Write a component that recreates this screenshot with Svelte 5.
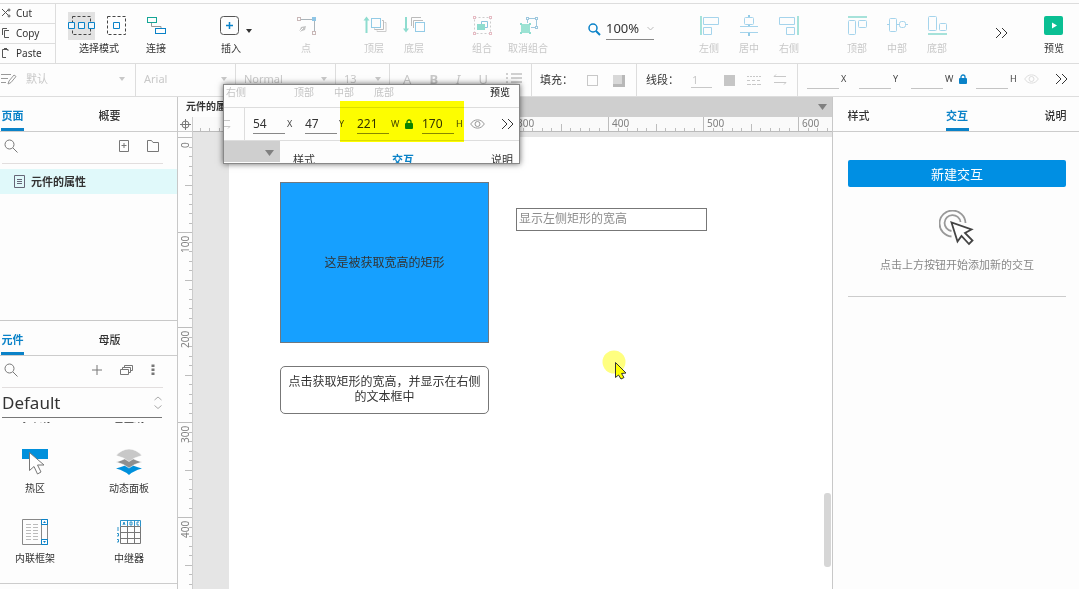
<script>
  const orderTools = [
    { kind: 'front', label: '顶层' },
    { kind: 'back', label: '底层' }
  ];
  const groupTools = [
    { kind: 'group', label: '组合' },
    { kind: 'ungroup', label: '取消组合' }
  ];
  const alignX = [
    { kind: 'left', label: '左侧' },
    { kind: 'center', label: '居中' },
    { kind: 'right', label: '右侧' }
  ];
  const alignY = [
    { kind: 'top', label: '顶部' },
    { kind: 'middle', label: '中部' },
    { kind: 'bottom', label: '底部' }
  ];
  const hundredPx = 95;
  let workWidth = $state(650);
  let workHeight = $state(490);
  const ticksUpTo = (length) =>
    Array.from({ length: 400 }, (_, i) => i - 3)
      .map((n) => ({
        at: Math.round((n * hundredPx) / 10),
        value: n * 10,
        size: n % 10 === 0 ? 15 : n % 5 === 0 ? 8 : 4
      }))
      .filter((t) => t.at < length);
  const majorsUpTo = (length) => ticksUpTo(length - 24).filter((t) => t.value >= 0 && t.value % 100 === 0);
  let across = $derived(workWidth - 50);
  let down = $derived(workHeight - 40);
  let zoom = $state('100%');
</script>

{#snippet icon(kind)}
  <svg class="ico" viewBox="0 0 40 28" width="40" height="28" fill="none" aria-hidden="true">
    {#if kind === 'connect'}
      <path d="M15.500 11v3.500h9.500v2" stroke="#999" />
      <rect x="11.500" y="5.500" width="9" height="5" stroke="#15a596" />
      <rect x="19.500" y="16.500" width="10" height="5" stroke="#0a82c8" />
    {:else if kind === 'insert'}
      <rect x="9.500" y="4.500" width="18" height="18" rx="3" stroke="#555" />
      <path d="M18.500 10v7M15 13.500h7" stroke="#0a82c8" stroke-width="1.500" />
    {:else if kind === 'point'}
      <path d="M14 7.500h12M28.500 9v10" stroke="#aab4ba" />
      <rect x="11.500" y="5.500" width="3" height="3" stroke="#c9b8b8" />
      <rect x="26" y="5" width="4" height="4" fill="#8fc6e6" />
      <rect x="26.500" y="19.500" width="3" height="3" stroke="#c9b8b8" />
      <path d="M13 20l2-5 5-1-1 4z" fill="#c4c4c4" /><path d="M13 20l4-4" stroke="#fff" />
    {:else if kind === 'front'}
      <path d="M12.500 21V7" stroke="#8edccf" stroke-width="2" />
      <path d="M9.500 8.500l3-4 3 4z" fill="#8edccf" />
      <path d="M28 8.500h1.500v9h-9v-1" stroke="#bbb" />
      <path d="M30.500 10.500h1.500v9h-9v-1" stroke="#ccc" />
      <rect x="17.500" y="6.500" width="9" height="9" stroke="#93cbe6" fill="#fdfdfd" />
    {:else if kind === 'back'}
      <path d="M12 5v14" stroke="#8edccf" stroke-width="2" />
      <path d="M9 16.500l3 4 3-4z" fill="#8edccf" />
      <path d="M17.500 14V5.500h9.500M19.500 16V8.500H29" stroke="#bbb" />
      <rect x="21.500" y="10.500" width="9" height="9" stroke="#93cbe6" fill="#fdfdfd" />
    {:else if kind === 'group'}
      <rect x="12.500" y="5.500" width="16" height="16" stroke="#ccc" stroke-dasharray="2 2" />
      {#each [[11, 4], [27, 4], [11, 20], [27, 20]] as [x, y]}
        <rect x={x + 0.5} y={y + 0.5} width="2" height="2" stroke="#e6bcc4" fill="#fff" />
      {/each}
      <rect x="15" y="12" width="8" height="6" fill="#8edccf" />
      <path d="M19.500 12V9.500h6v6H23" stroke="#8cc5df" />
    {:else if kind === 'ungroup'}
      <path d="M19.500 11V6.500h9v9H23" stroke="#9ec8de" />
      <rect x="18.500" y="5.500" width="2" height="2" stroke="#9ec8de" fill="#fff" />
      <rect x="27.500" y="5.500" width="2" height="2" stroke="#9ec8de" fill="#fff" />
      <rect x="27.500" y="14.500" width="2" height="2" stroke="#9ec8de" fill="#fff" />
      <rect x="13" y="12" width="9" height="9" fill="#9de3d4" />
      <path d="M12 11h2v2h-2zM21 11h2v2h-2zM12 20h2v2h-2zM21 20h2v2h-2z" fill="#8edccf" />
    {:else if kind === 'left'}
      <path d="M12 4v19" stroke="#a6e2da" stroke-width="2" />
      <path d="M14.500 5.500h15v7h-15zM14.500 15.500h8v7h-8z" stroke="#a5d4ec" stroke-linejoin="round" />
    {:else if kind === 'center'}
      <rect x="15.500" y="5.500" width="9" height="7" rx="1" stroke="#a5d4ec" />
      <path d="M20 3v2M20 13v2M20 20v4" stroke="#93cbe6" stroke-width="2" />
      <path d="M11 14.500h18M11 20.500h18" stroke="#a5d4ec" />
    {:else if kind === 'right'}
      <path d="M29 4v19" stroke="#a6e2da" stroke-width="2" />
      <path d="M10.500 5.500h15v7h-15zM17.500 15.500h8v7h-8z" stroke="#a5d4ec" stroke-linejoin="round" />
    {:else if kind === 'top'}
      <path d="M11 5h19" stroke="#a6e2da" stroke-width="2" />
      <rect x="11.500" y="8.500" width="7" height="14" rx="1" stroke="#a5d4ec" />
      <rect x="21.500" y="8.500" width="8" height="7" rx="1" stroke="#a5d4ec" />
    {:else if kind === 'middle'}
      <path d="M10 12.500h2M19 12.500h4M28 12.500h3" stroke="#a5d4ec" />
      <rect x="12.500" y="6.500" width="7" height="13" rx="1" stroke="#a5d4ec" />
      <rect x="22.500" y="9.500" width="6" height="6" rx="2" stroke="#a5d4ec" />
    {:else if kind === 'bottom'}
      <path d="M11 22h19" stroke="#a6e2da" stroke-width="2" />
      <rect x="11.500" y="4.500" width="8" height="14" rx="1" stroke="#a5d4ec" />
      <rect x="22.500" y="11.500" width="7" height="7" rx="1" stroke="#a5d4ec" />
    {:else if kind === 'preview'}
      <rect x="10" y="4" width="19" height="19" rx="2" fill="#0abf93" />
      <path d="M18 10.500v6l5-3z" fill="#fff" />
    {/if}
  </svg>
{/snippet}

{#snippet tool(t, on = false)}
  <button class="tool" class:on>{@render icon(t.kind)}<span>{t.label}</span></button>
{/snippet}

{#snippet chevrons()}
  <svg width="13" height="12" viewBox="0 0 13 12" fill="none" stroke="#333" aria-hidden="true"><path d="M1 1l5 5-5 5M7 1l5 5-5 5" /></svg>
{/snippet}

{#snippet caret(color = '#c8c8c8')}
  <svg class="caret" width="6" height="4" viewBox="0 0 6 4" aria-hidden="true"><path d="M0 0h6L3 4z" fill={color} /></svg>
{/snippet}

{#snippet lock(color)}
  <svg class="lock" width="8" height="10" viewBox="0 0 8 10" aria-hidden="true"><rect y="4" width="8" height="6" rx="1" fill={color} /><path d="M2 5V3a2 2 0 0 1 4 0v2" fill="none" stroke={color} stroke-width="1.300" /></svg>
{/snippet}

{#snippet eye(color)}
  <svg width="15" height="10" viewBox="0 0 15 10" fill="none" stroke={color} aria-hidden="true"><path d="M.7 5C4-.5 11-.5 14.300 5 11 10.500 4 10.500.7 5z" /><circle cx="7.500" cy="5" r="2.500" /></svg>
{/snippet}

{#snippet arrows()}
  <svg width="14" height="12" viewBox="0 0 14 12" fill="none" stroke="#c8c8c8" aria-hidden="true"><path d="M1 2.500h12M3 .5l-2 2M1 8.500h12M11 10.500l2-2" /></svg>
{/snippet}

{#snippet search()}
  <svg width="14" height="14" viewBox="0 0 14 14" fill="none" stroke="#777" aria-hidden="true"><circle cx="5.500" cy="5.500" r="4.500" /><path d="M9 9l4.500 4.500" /></svg>
{/snippet}

{#snippet field(label, value)}
  <label class="field"><input type="text" {value} /><span>{label}</span></label>
{/snippet}

<div class="app">
  <header class="bar">
    <div class="clip">
      <button><svg width="10" height="10" viewBox="0 0 10 10" fill="none" stroke="#555" aria-hidden="true"><path d="M1 1l6 6M1 8l6-6" /><circle cx="8" cy="2" r="1" /><circle cx="8" cy="8" r="1" /></svg>Cut</button>
      <button><svg width="10" height="10" viewBox="0 0 10 10" fill="none" stroke="#555" aria-hidden="true"><path d="M1.500 7V.5H6M3.500 2.500H8M3.500 2.500v7H8" /></svg>Copy</button>
      <button><svg width="10" height="10" viewBox="0 0 10 10" fill="none" stroke="#555" aria-hidden="true"><path d="M5 9.500H1.500v-8H7V3M3 .5h3" /></svg>Paste</button>
    </div>
    <div class="modes">
      <div class="pair">
        <button class="active" aria-label="相交选择">
          <svg width="27" height="28" viewBox="0 0 27 28" fill="none" aria-hidden="true">
            <rect x="4.500" y="4.500" width="18" height="18" stroke="#444" stroke-dasharray="3 2" />
            <path d="M.5 10.500h6v6h-6zM10.500 10.500h6v6h-6zM20.500 10.500h6v6h-6z" stroke="#0a82c8" fill="#eef6fb" />
          </svg>
        </button>
        <button aria-label="包含选择">
          <svg width="27" height="28" viewBox="0 0 27 28" fill="none" aria-hidden="true">
            <rect x="4.500" y="4.500" width="18" height="18" stroke="#444" stroke-dasharray="3 2" />
            <path d="M10.500 10.500h6v6h-6z" stroke="#0a82c8" />
          </svg>
        </button>
      </div>
      <span>选择模式</span>
    </div>
    <div class="set near">{@render tool({ kind: 'connect', label: '连接' }, true)}</div>
    <div class="set">{@render tool({ kind: 'insert', label: '插入' }, true)}{@render caret('#333')}</div>
    <div class="set">{@render tool({ kind: 'point', label: '点' })}</div>
    <div class="set mid">{#each orderTools as t}{@render tool(t)}{/each}</div>
    <div class="set mid wide">{#each groupTools as t}{@render tool(t)}{/each}</div>
    <div class="zoom">
      <svg width="13" height="13" viewBox="0 0 13 13" fill="none" stroke="#0a82c8" aria-hidden="true"><circle cx="5" cy="5" r="4" stroke-width="1.500" /><path d="M8 8l4 4" stroke-width="2" /></svg>
      <label class="drop"><select bind:value={zoom} aria-label="缩放"><option>100%</option></select>
        <svg width="7" height="4" viewBox="0 0 7 4" fill="none" stroke="#bbb" aria-hidden="true"><path d="M.5 0l3 3 3-3" /></svg></label>
    </div>
    <div class="set">{#each alignX as t}{@render tool(t)}{/each}</div>
    <div class="set mid">{#each alignY as t}{@render tool(t)}{/each}</div>
    <button class="more" aria-label="更多">{@render chevrons()}</button>
    <div class="set end">{@render tool({ kind: 'preview', label: '预览' }, true)}</div>
  </header>

  <div class="style">
    <div class="cell c1">
      <svg width="16" height="14" viewBox="0 0 16 14" fill="none" stroke="#999" aria-hidden="true"><path d="M0 2.500h10M0 6.500h7M0 10.500h5M7 12l1-3 5-6 2 1.500-5 6z" /></svg>
      <label class="drop"><select aria-label="样式"><option>默认</option></select>{@render caret()}</label>
    </div>
    <div class="cell c2"><label class="drop"><select aria-label="字体"><option>Arial</option></select>{@render caret()}</label></div>
    <div class="cell c2"><label class="drop"><select aria-label="字重"><option>Normal</option></select>{@render caret()}</label></div>
    <div class="cell c3"><label class="drop"><select aria-label="字号"><option>13</option></select>{@render caret()}</label></div>
    <div class="cell c4">
      <button>A</button><button><b>B</b></button><button><i>I</i></button><button><u>U</u></button>
      <button aria-label="列表"><svg width="16" height="12" viewBox="0 0 16 12" stroke="#d0d0d0" stroke-width="2" aria-hidden="true"><path d="M0 1h2M5 1h11M0 5h2M5 5h11M0 9h2M5 9h11" /></svg></button>
    </div>
    <div class="cell c5">
      <span>填充：</span>
      <button aria-label="填充颜色"><svg width="11" height="11" aria-hidden="true"><rect x=".5" y=".5" width="10" height="10" fill="none" stroke="#c8c8c8" /></svg></button>
      <button aria-label="阴影"><svg width="13" height="13" aria-hidden="true"><path d="M1 1h12v12H1z" fill="#b8b8b8" /><path d="M1 1h9v9H1z" fill="#d8d8d8" /></svg></button>
    </div>
    <div class="cell c6">
      <span>线段：</span>
      <input class="thin" type="text" value="1" aria-label="线宽" />
      <button aria-label="线颜色"><svg width="11" height="11" aria-hidden="true"><rect width="11" height="11" fill="#c6c6c6" /></svg></button>
      <button aria-label="线型"><svg width="14" height="11" viewBox="0 0 14 11" stroke="#c8c8c8" aria-hidden="true"><path d="M0 1.500h14" stroke-dasharray="2 1" /><path d="M0 5.500h14" stroke-dasharray="3 2" /><path d="M0 9.500h14" stroke-dasharray="4 1" /></svg></button>
      <button aria-label="箭头">{@render arrows()}</button>
    </div>
    <div class="cell c7">
      {@render field('X', '')}{@render field('Y', '')}{@render field('W', '')}
      <button class="lk" aria-label="锁定宽高比">{@render lock('#0a82c8')}</button>
      {@render field('H', '')}
      <button class="ey" aria-label="显示">{@render eye('#ddd')}</button>
      <button aria-label="更多属性">{@render chevrons()}</button>
    </div>
  </div>

  <main>
    <aside class="left">
      <section>
        <nav class="tabs"><button class="sel">页面</button><button>概要</button></nav>
        <div class="find">
          {@render search()}
          <button class="push" aria-label="新建页面"><svg width="10" height="12" viewBox="0 0 10 12" fill="none" stroke="#777" aria-hidden="true"><path d="M.5.5h9v11h-9zM5 3v5M2.500 5.500h5" /></svg></button>
          <button aria-label="新建文件夹"><svg width="12" height="12" viewBox="0 0 12 12" fill="none" stroke="#777" aria-hidden="true"><path d="M.5.5h4l1.500 2h5.500v9H.5z" /></svg></button>
        </div>
        <button class="page">
          <svg width="12" height="13" viewBox="0 0 12 13" fill="none" stroke="#667" aria-hidden="true"><path d="M.5.5h10v12H.5zM3 4.500h5M3 6.500h5M3 8.500h5" /></svg>
          元件的属性
        </button>
      </section>
      <section class="lib">
        <nav class="tabs"><button class="sel">元件</button><button>母版</button></nav>
        <div class="find">
          {@render search()}
          <button class="push" aria-label="添加"><svg width="10" height="10" viewBox="0 0 10 10" stroke="#777" aria-hidden="true"><path d="M5 0v10M0 5h10" /></svg></button>
          <button aria-label="元件库"><svg width="13" height="12" viewBox="0 0 13 12" fill="none" stroke="#777" aria-hidden="true"><path d="M.5 5.500h8v5h-8zM2.500 5V3.500h8v5H9M4.500 3V1.500h8v5H11" /></svg></button>
          <button class="dots" aria-label="选项"><svg width="4" height="12" viewBox="0 0 4 12" fill="#777" aria-hidden="true"><path d="M.5.5h3v2.500h-3zM.5 4.500h3V7h-3zM.5 8.500h3V11h-3z" /></svg></button>
        </div>
        <label class="drop library"><select aria-label="元件库"><option>Default</option></select>
          <svg width="8" height="14" viewBox="0 0 8 14" fill="none" stroke="#aaa" aria-hidden="true"><path d="M.5 4L4 1l3.500 3M.5 9.500l3.500 3 3.500-3" /></svg></label>
        <div class="shapes">
          <button><svg width="28" height="28" aria-hidden="true"><path d="M1 14h26" stroke="#888" /></svg>水平线</button>
          <button><svg width="28" height="28" aria-hidden="true"><path d="M14 1v26" stroke="#888" /></svg>垂直线</button>
          <button><svg width="28" height="28" viewBox="0 0 28 28" aria-hidden="true"><path d="M1 1h26v10H1z" fill="#0090dc" /><path d="M8.500 4.500v18l4.500-4 3.500 7.500 3.500-2-3.500-7h6.500z" fill="#fff" stroke="#777" /></svg>热区</button>
          <button><svg width="28" height="28" viewBox="0 0 28 28" aria-hidden="true"><path d="M1 20.500Q10 18 14 15q4 3 13 5.500Q18 23 14 27q-4-4-13-6.500z" fill="#0090dc" /><path d="M1 14Q9 12 14 8q5 4 13 6-8 2-13 6-5-4-13-6z" fill="#8f8f8f" stroke="#fff" stroke-width=".6" /><path d="M1 7.500Q7 1 14 1t13 6.500Q19 9.500 14 13.500q-5-4-13-6z" fill="#c8c8c8" stroke="#fff" stroke-width=".6" /></svg>动态面板</button>
          <button><svg width="28" height="28" viewBox="0 0 28 28" fill="none" aria-hidden="true"><path d="M1.500 1.500h25v25h-25zM20.500 1v26" stroke="#888" /><path d="M5 6.500h5M12 6.500h5M5 9.500h5M12 9.500h5M5 12.500h5M12 12.500h5M5 15.500h5M12 15.500h5M5 18.500h5M12 18.500h5M5 21.500h5M12 21.500h5" stroke="#bbb" /><path d="M20.500 1.500h6v5h-6zM20.500 21.500h6v5h-6z" stroke="#0a82c8" /><path d="M22 5l1.500-2L25 5zM22 23l1.500 2 1.500-2z" fill="#0a82c8" /></svg>内联框架</button>
          <button><svg width="28" height="28" viewBox="0 0 28 28" fill="none" aria-hidden="true"><path d="M5.500 8.500h20M5.500 14.500h20M5.500 20.500h20M5.500 8.500v17h20v-17M12.500 8.500v17M19.500 8.500v17" stroke="#777" /><path d="M5.500 8.500v-6h20v6M12.500 2v6M19.500 2v6M8 7l1-3 1 3M15 7V4h2v3zM24 4h-2v3h2M3 9v4M2 15.500h1.500V18H2M2 21.500h1.500V24H2" stroke="#2b93ca" /></svg>中继器</button>
        </div>
      </section>
    </aside>

    <section class="work" bind:clientWidth={workWidth} bind:clientHeight={workHeight}>
      <div class="files"><button>元件的属性</button><svg width="9" height="6" viewBox="0 0 9 6" aria-hidden="true"><path d="M0 0h9L4.500 6z" fill="#808080" /></svg></div>
      <div class="corner"><svg width="13" height="13" viewBox="0 0 13 13" fill="none" stroke="#777" aria-hidden="true"><circle cx="6.500" cy="6.500" r="3.500" /><path d="M6.500 1v11M1 6.500h11" /></svg></div>
      <svg class="hr" aria-hidden="true">
        <g transform="translate(35 0)">
          {#each ticksUpTo(across) as t}<path d="M{t.at + 0.5} {15 - t.size}v{t.size}" stroke="#bdbdbd" />{/each}
          {#each majorsUpTo(across) as m}<text x={m.at + 4} y="10">{m.value}</text>{/each}
        </g>
      </svg>
      <svg class="vr" aria-hidden="true">
        <g transform="translate(0 5)">
          {#each ticksUpTo(down) as t}<path d="M{15 - t.size} {t.at + 0.5}h{t.size}" stroke="#bdbdbd" />{/each}
          {#each majorsUpTo(down) as m}<text transform="translate(11 {m.at + (m.value ? 21 : 11)}) rotate(-90)">{m.value}</text>{/each}
        </g>
      </svg>
      <div class="stage">
        <div class="sheet">
          <div class="rect">这是被获取宽高的矩形</div>
          <input class="out" type="text" placeholder="显示左侧矩形的宽高" aria-label="矩形宽高" />
          <button class="get">点击获取矩形的宽高，并显示在右侧的文本框中</button>
          <svg class="pointer" width="28" height="34" viewBox="0 0 28 34" aria-hidden="true"><circle cx="12" cy="12" r="11.500" fill="#ffff80" /><path d="M13.500 12.500v15l3-2.500 2.500 4 3-1.500-2.500-4 4.500-.5z" fill="#ff0" stroke="#333" /></svg>
          <div class="thumb"></div>
        </div>
      </div>
    </section>

    <aside class="inspect">
      <nav class="tabs"><button>样式</button><button class="sel">交互</button><button>说明</button></nav>
      <div class="empty">
        <button class="new">新建交互</button>
        <svg width="36" height="36" viewBox="0 0 36 36" fill="none" aria-hidden="true"><path d="M12.500 26.500A13 13 0 1 1 26.500 13M12.500 21A8 8 0 1 1 21.500 12" stroke="#999" stroke-width="1.800" /><path d="M12.500 12.500l6 19 4-5.500 7.500 8 3.500-3.500-7.500-7.500 6.500-3.500z" fill="#fff" stroke="#444" stroke-width="1.800" /></svg>
        <p>点击上方按钮开始添加新的交互</p>
      </div>
    </aside>
  </main>

  <div class="loupe">
    <div class="l1"><span>右侧</span><span>顶部</span><span>中部</span><span>底部</span><strong>预览</strong></div>
    <div class="l2">
      <div class="stub">{@render arrows()}</div>
      {@render field('X', '54')}{@render field('Y', '47')}{@render field('W', '221')}
      <span class="lk">{@render lock('#0a82c8')}</span>
      {@render field('H', '170')}
      <span class="ey">{@render eye('#999')}</span>
      {@render chevrons()}
    </div>
    <div class="l3">
      <div class="grey"><svg width="9" height="6" viewBox="0 0 9 6" aria-hidden="true"><path d="M0 0h9L4.500 6z" fill="#808080" /></svg></div>
      <div class="names"><span>样式</span><b>交互</b><span>说明</span></div>
    </div>
    <div class="mark"></div>
  </div>
</div>

<style>
  :global(body) { margin: 0; background: #fdfdfd; }
  .app {
    position: relative; display: flex; flex-direction: column; height: 100vh; overflow: hidden;
    box-sizing: border-box; padding-top: 3px; background: #fdfdfd; color: #333;
    font: 11px/14px "Noto Sans", "Noto Sans CJK SC", sans-serif;
  }
  .app :global(*) { box-sizing: border-box; }
  button, input, select { font: inherit; color: inherit; background: none; border: 0; padding: 0; margin: 0; border-radius: 0; outline: 0; appearance: none; }
  svg { display: block; flex: none; }

  .bar { display: flex; flex: none; height: 61px; border-top: 1px solid #ddd; border-bottom: 1px solid #ddd; }
  .clip { display: flex; flex-direction: column; width: 56px; flex: none; border-right: 1px solid #ddd; font-size: 10px; }
  .clip button { display: flex; align-items: center; gap: 5px; flex: 1; padding: 0 0 2px 1px; }
  .clip button + button { border-top: 1px solid #ddd; }
  .modes { display: flex; flex-direction: column; align-items: center; gap: 1px; padding: 8px 0 0 12px; font-size: 10px; flex: none; }
  .pair { display: flex; gap: 8px; }
  .active { background: #e2e2e2; }
  .set { display: flex; margin-left: 35px; padding-top: 8px; flex: none; position: relative; }
  .set.near { margin-left: 6px; }
  .set.mid { margin-left: 28px; }
  .wide { gap: 6px; }
  .set.end { margin-left: 26px; margin-right: 5px; }
  .set > .caret { position: absolute; left: 35px; top: 25px; }
  .tool { display: flex; flex-direction: column; align-items: center; gap: 1px; width: 40px; height: 43px; font-size: 10px; color: #c8c8c8; white-space: nowrap; }
  .tool.on { color: #333; }
  .zoom { display: flex; align-items: center; gap: 5px; margin-left: 40px; height: 50px; flex: none; }
  .zoom .drop { width: 48px; font-size: 13px; border-bottom: 1px solid #888; height: 22px; }
  .zoom select { padding-bottom: 2px; }
  .more { margin-left: auto; height: 58px; }

  .drop { display: flex; align-items: center; flex: 1; min-width: 0; }
  .drop select { flex: 1; min-width: 0; }
  .style { display: flex; flex: none; height: 33px; border-bottom: 1px solid #ddd; }
  .cell { display: flex; align-items: center; border-right: 1px solid #ddd; flex: none; padding-bottom: 2px; color: #c8c8c8; }
  .c1 { width: 136px; padding-left: 1px; padding-right: 10px; gap: 9px; }
  .c2 { width: 100px; padding-left: 8px; padding-right: 8px; }
  .c3 { width: 54px; padding-left: 8px; padding-right: 8px; }
  .c4 { width: 142px; padding: 0 9px 2px 13px; justify-content: space-between; font-size: 13px; }
  .c5 { width: 105px; padding: 0 11px 0 8px; color: #333; justify-content: space-between; }
  .c6 { width: 161px; padding: 0 10px 0 9px; color: #333; justify-content: space-between; }
  .c7 { flex: 1; padding: 0 11px 2px 9px; border: 0; color: #444; }
  .thin { width: 21px; height: 16px; border-bottom: 1px solid #c8c8c8; color: #c8c8c8; padding-left: 1px; }
  .field { display: flex; align-items: center; gap: 2px; width: 52px; flex: none; font-size: 9px; }
  .field input { width: 32px; height: 20px; border-bottom: 1px solid #c4c4c4; font-size: 12px; color: #333; }
  .field:nth-of-type(n + 3) { width: 48px; }
  .lk { padding-right: 9px; }
  .ey { margin-right: 16px; }

  main { display: flex; flex: 1; min-height: 0; }
  .left { width: 178px; flex: none; display: grid; grid-template-rows: 223px minmax(0, 1fr); border-right: 1px solid #c8c8c8; }
  .tabs { display: flex; height: 35px; flex: none; border-bottom: 1px solid #ccc; padding-left: 1px; gap: 74px; font-weight: 500; }
  .tabs button { padding-top: 7px; border-bottom: 3px solid transparent; min-width: 23px; white-space: nowrap; }
  .tabs .sel { color: #0a82c8; border-color: #0a82c8; font-weight: 700; }
  .find { display: flex; align-items: center; height: 32px; margin: 0 14px 0 2px; padding: 0 4px 3px 2px; gap: 18px; border-bottom: 1px solid #e2dede; }
  .push { margin-left: auto; }
  .page { display: flex; align-items: center; gap: 5px; width: 100%; height: 25px; margin-top: 5px; padding-left: 14px; background: #e0f9fa; font-weight: 700; }
  .lib { display: flex; flex-direction: column; border-top: 1px solid #c8c8c8; margin-bottom: 5px; border-bottom: 1px solid #ccc; overflow: hidden; }
  .dots { padding: 0 4px 0 0; }
  .library { flex: none; height: 30px; margin: 0 15px 4px 2px; font-size: 17px; border-bottom: 1px solid #777; }
  .library select { height: 28px; }
  .shapes { flex: 1; min-height: 0; overflow: hidden; display: grid; grid-template-columns: 1fr 1fr; grid-auto-rows: 70px; align-content: end; gap: 0 26px; padding: 0 14px 0 1px; font-size: 10px; }
  .shapes button { display: flex; flex-direction: column; align-items: center; gap: 5px; padding-top: 5px; white-space: nowrap; }

  .work { flex: 1; min-width: 0; display: grid; grid-template-columns: 15px 1fr; grid-template-rows: 20px 15px minmax(0, 1fr); }
  .files { grid-column: 1 / 3; display: flex; align-items: center; justify-content: space-between; background: #cfcfcf; padding-right: 5px; }
  .files button { height: 20px; background: #fdfdfd; padding: 0 8px 3px; font-weight: 700; font-size: 10px; }
  .corner { border-right: 1px solid #ccc; border-bottom: 1px solid #ccc; padding: 1px 0 0 1px; }
  .hr { width: 100%; height: 15px; border-bottom: 1px solid #bbb; background: #fafafa; }
  .vr { width: 15px; height: 100%; border-right: 1px solid #ccc; }
  .hr text, .vr text { font-size: 10px; fill: #808080; }
  .stage { background: #e5e5e5; padding: 5px 0 0 36px; display: flex; }
  .sheet { position: relative; flex: 1; background: #fff; font-size: 12px; line-height: 15px; }
  .rect { position: absolute; left: 51px; top: 45px; width: 209px; height: 161px; display: grid; place-items: center; background: #16a0ff; border: 1px solid #6f7880; }
  .out { position: absolute; left: 287px; top: 71px; width: 191px; height: 23px; border: 1px solid #777; padding: 0 2px 2px; }
  .out::placeholder { color: #8c8c8c; opacity: 1; }
  .get { position: absolute; left: 51px; top: 229px; width: 209px; height: 48px; border: 1px solid #777; border-radius: 5px; padding: 0 3px 2px; }
  .pointer { position: absolute; left: 373px; top: 213px; }
  .thumb { position: absolute; right: 1px; bottom: 22px; width: 7px; height: 74px; border-radius: 3px; background: #d6d6d6; }

  .inspect { width: 247px; flex: none; border-left: 1px solid #c8c8c8; }
  .inspect .tabs { justify-content: space-between; padding: 0 12px 0 14px; gap: 0; }
  .empty { display: flex; flex-direction: column; align-items: center; margin: 28px 13px 0 15px; border-bottom: 1px solid #ccc; }
  .new { width: 100%; height: 27px; border-radius: 2px; background: #008fe3; color: #fff; font-size: 13px; margin-bottom: 23px; }
  .empty p { margin: 12px 0 24px; color: #888; }

  .loupe { position: absolute; left: 223px; top: 84px; width: 297px; height: 80px; overflow: hidden; border: 1px solid #888; background: #fdfdfd; box-shadow: 0 0 6px #0009; }
  .l1 { display: flex; height: 23px; padding: 0 9px 0 2px; gap: 20px; border-bottom: 1px solid #ddd; font-size: 10px; color: #c4c4c4; }
  .l1 span:first-child { margin-right: 28px; }
  .l1 strong { margin-left: auto; font-weight: 500; color: #333; }
  .l2 { display: flex; align-items: center; height: 33px; border-bottom: 1px solid #ddd; padding-bottom: 1px; color: #444; }
  .l2 .stub { width: 21px; flex: none; height: 33px; margin-right: 8px; border-right: 1px solid #ddd; display: flex; align-items: center; justify-content: flex-end; padding-right: 13px; overflow: hidden; }
  .l2 .field input { border-color: #888; }
  .l3 { display: flex; }
  .grey { width: 56px; height: 21px; background: #cfcfcf; display: flex; align-items: center; justify-content: flex-end; padding: 2px 6px 0 0; }
  .names { flex: 1; display: flex; justify-content: space-between; padding: 12px 6px 0 13px; }
  .names b { color: #0a82c8; }
  .mark { position: absolute; left: 116px; top: 16px; width: 124px; height: 41px; background: #ff0; mix-blend-mode: multiply; }
</style>
